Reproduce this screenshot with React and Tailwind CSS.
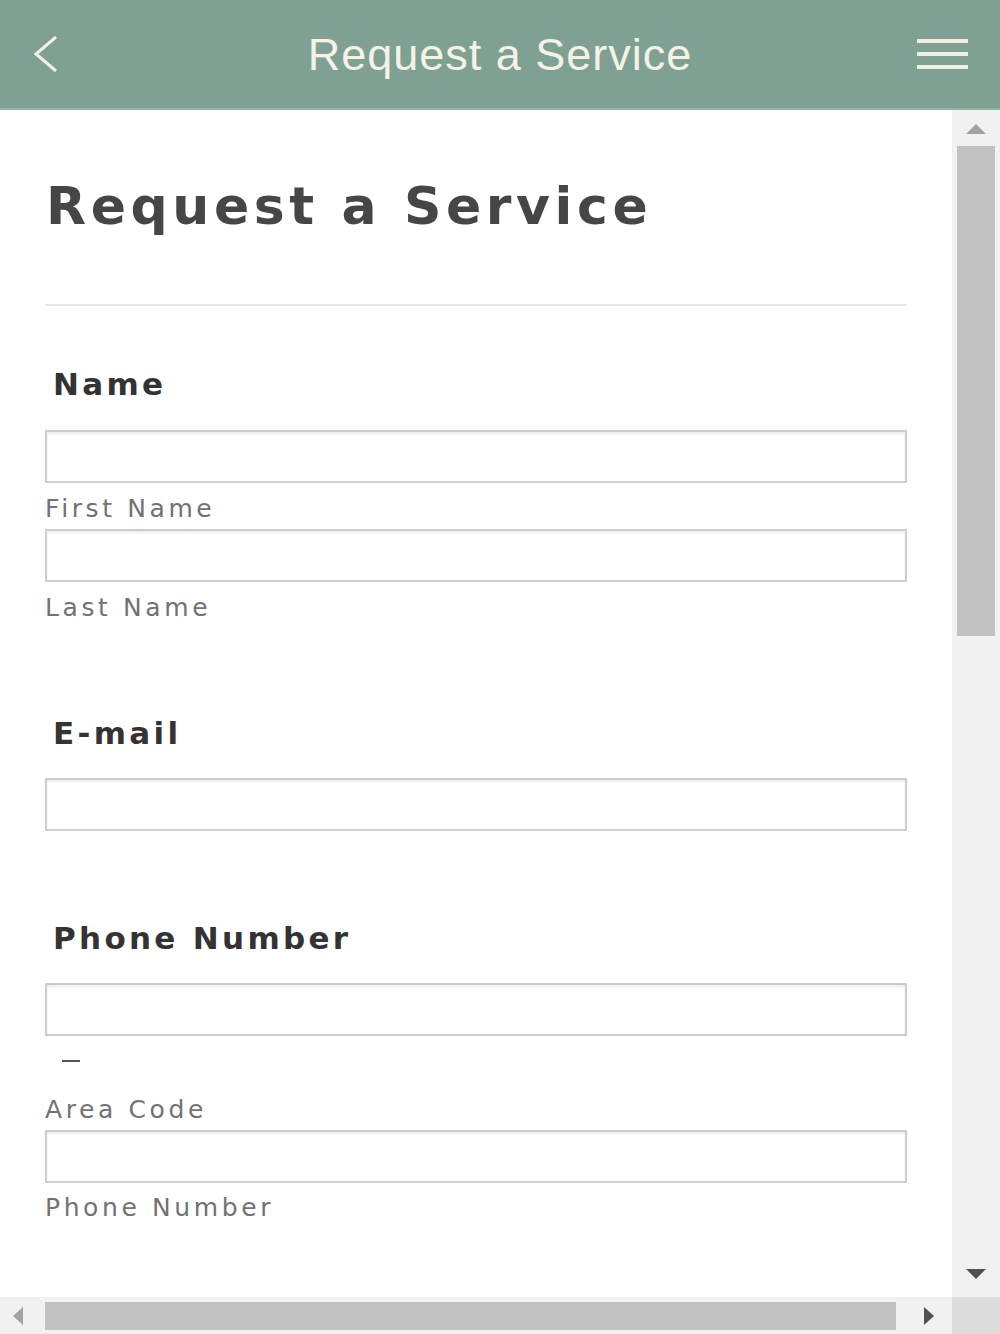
export default function App() {
  const label =
    "pl-[8px] text-[31px] leading-[31px] font-bold text-[#333333] tracking-[3.3px] font-['DejaVu_Sans',sans-serif]";
  const sub =
    "text-[25px] leading-[25px] text-[#727272] tracking-[3.6px] font-['DejaVu_Sans',sans-serif]";
  const input =
    "block w-full h-[53px] border-2 border-[#cdcdcd] bg-white shadow-[inset_0_2px_3px_rgba(0,0,0,0.07)] outline-none";
  return (
    <div className="w-[1000px] h-[1334px] flex flex-col overflow-hidden bg-white">
      <header className="h-[110px] shrink-0 bg-[#7fa193] border-b-2 border-[#94b2a5] grid grid-cols-[1fr_auto_1fr] items-center px-[32px]">
        <svg width="28" height="38" viewBox="0 0 28 38" className="justify-self-start">
          <polyline points="24,2 4,19 24,36" fill="none" stroke="#f3f1e5" strokeWidth="3" strokeLinejoin="miter" />
        </svg>
        <div className="text-[45px] leading-none tracking-[1px] text-[#f5f2e6] font-['Liberation_Sans',Arial,sans-serif]">
          Request a Service
        </div>
        <div className="justify-self-end flex flex-col gap-[9px] w-[51px]">
          <div className="h-[4px] bg-[#f1efe3]" />
          <div className="h-[4px] bg-[#f1efe3]" />
          <div className="h-[4px] bg-[#f1efe3]" />
        </div>
      </header>

      <div className="flex flex-1 min-h-0">
        <main className="flex-1 min-w-0 pt-[70px] px-[45px]">
          <h1 className="pl-[1px] text-[52px] leading-[52px] font-bold text-[#464646] tracking-[4.6px] font-['DejaVu_Sans',sans-serif]">
            Request a Service
          </h1>
          <div className="mt-[72px] h-[2px] bg-[#e8e8e8]" />

          <div className={"mt-[63px] " + label}>Name</div>
          <input className={"mt-[30px] " + input} />
          <div className={"mt-[13px] " + sub}>First Name</div>
          <input className={"mt-[8px] " + input} />
          <div className={"mt-[13px] " + sub}>Last Name</div>

          <div className={"mt-[98px] " + label}>E-mail</div>
          <input className={"mt-[29px] " + input} />

          <div className={"mt-[92px] " + label}>Phone Number</div>
          <input className={"mt-[29px] " + input} />
          <div className="mt-[24px] ml-[17px] w-[18px] h-[2px] bg-[#555555]" />
          <div className={"mt-[35px] " + sub}>Area Code</div>
          <input className={"mt-[8px] " + input} />
          <div className={"mt-[12px] " + sub}>Phone Number</div>
        </main>

        <div className="w-[48px] shrink-0 bg-[#f1f1f1] flex flex-col items-center pt-[14px] pb-[18px]">
          <svg width="20" height="10" viewBox="0 0 20 10">
            <polygon points="10,0 20,10 0,10" fill="#a3a3a3" />
          </svg>
          <div className="mt-[12px] w-[38px] h-[490px] bg-[#c1c1c1]" />
          <div className="flex-1" />
          <svg width="20" height="10" viewBox="0 0 20 10">
            <polygon points="0,0 20,0 10,10" fill="#505050" />
          </svg>
        </div>
      </div>

      <div className="h-[37px] shrink-0 flex">
        <div className="flex-1 bg-[#f1f1f1] flex items-center">
          <svg width="10" height="18" viewBox="0 0 10 18" className="ml-[13px]">
            <polygon points="10,0 10,18 0,9" fill="#a3a3a3" />
          </svg>
          <div className="ml-[22px] w-[851px] h-[28px] bg-[#c1c1c1]" />
          <svg width="10" height="18" viewBox="0 0 10 18" className="ml-[28px]">
            <polygon points="0,0 10,9 0,18" fill="#505050" />
          </svg>
        </div>
        <div className="w-[48px] bg-[#dcdcdc]" />
      </div>
    </div>
  );
}
